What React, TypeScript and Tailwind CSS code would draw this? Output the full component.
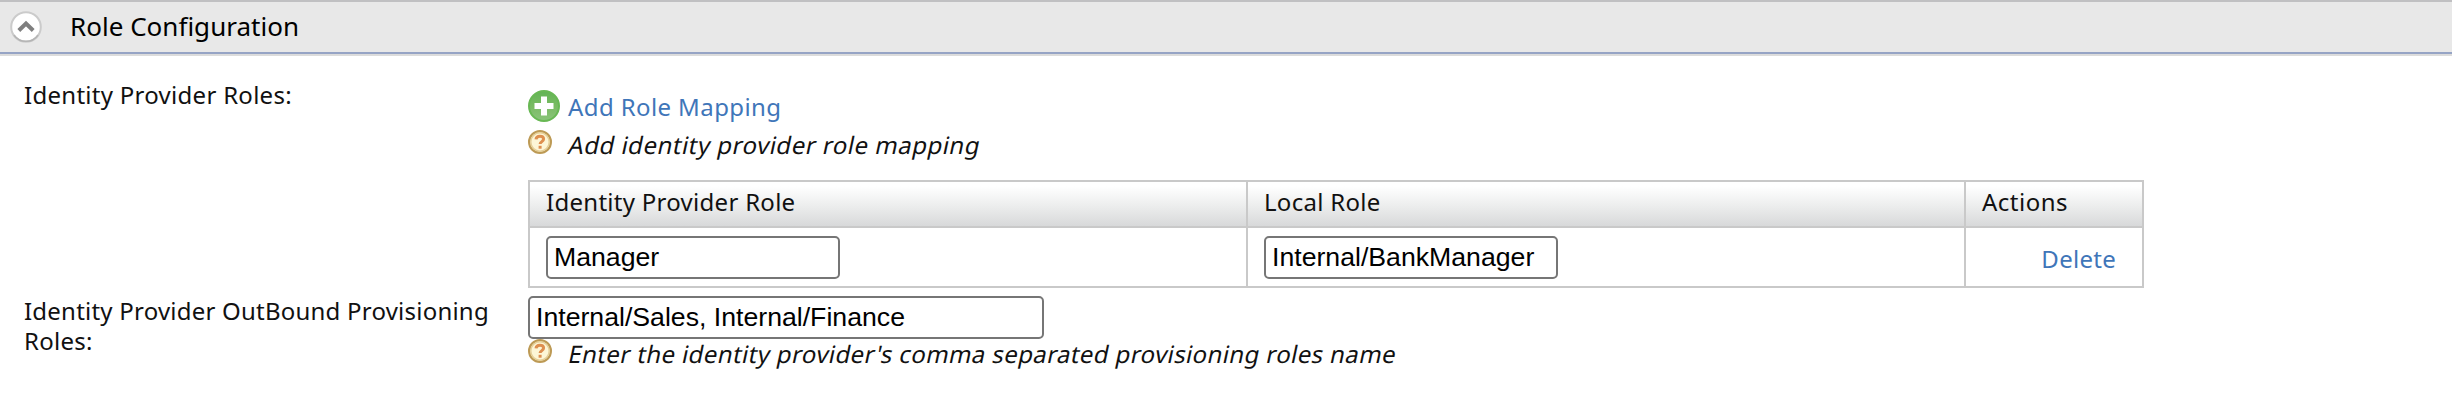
import type { ReactNode } from "react";

function CollapseIcon() {
  return (
    <svg className="block size-8 shrink-0" viewBox="0 0 32 32" fill="none">
      <circle cx="16" cy="16" r="14.800" fill="#fff" stroke="#cbcbcb" strokeWidth="2" />
      <path d="M4 24a14.500 14.500 0 0 0 24 0" stroke="#b4b4b4" strokeWidth="1.500" />
      <path d="M8.800 19.500l7.200-7 7.200 7" stroke="#7f7f7f" strokeWidth="4" />
    </svg>
  );
}

function AddIcon() {
  return (
    <svg className="block size-8 shrink-0" viewBox="0 0 32 32">
      <defs>
        <linearGradient id="add-fill" x1="0" y1="0" x2="0" y2="1">
          <stop offset="0" stopColor="#62b455" />
          <stop offset="0.5" stopColor="#7abb63" />
          <stop offset="1" stopColor="#8ac47b" />
        </linearGradient>
      </defs>
      <circle cx="16" cy="16" r="15" fill="url(#add-fill)" stroke="#68b854" strokeWidth="2" />
      <path d="M13 6.500h6V13h6.500v6H19v6.500h-6V19H6.500v-6H13z" fill="#fff" />
    </svg>
  );
}

function HelpIcon() {
  return (
    <svg className="block size-6 shrink-0" viewBox="0 0 24 24" fill="none">
      <circle cx="12" cy="12" r="10.900" fill="#fdf6d6" stroke="#bd9a55" strokeWidth="2.200" />
      <circle cx="12" cy="12" r="9.200" stroke="#e5cf98" strokeWidth="1.400" />
      <path d="M8 9.400c.2-2.200 1.700-3.200 3.900-3.200 2.300 0 3.700 1.100 3.700 2.900 0 2.500-3.500 2.500-3.500 5" stroke="#de8f4f" strokeWidth="3" />
      <path d="M10.600 15.800h3v2.900h-3z" fill="#de8f4f" />
    </svg>
  );
}

function Hint({ children, className }: { children: ReactNode; className: string }) {
  return (
    <div className="flex items-start gap-[17px]">
      <HelpIcon />
      <span className={`inline-block -skew-x-12 whitespace-nowrap ${className}`}>{children}</span>
    </div>
  );
}

function Field({ value, label, className }: { value: string; label: string; className: string }) {
  return (
    <input
      aria-label={label}
      defaultValue={value}
      className={`block h-[43px] rounded-[5px] border-2 border-[#767676] bg-white px-[6px] font-['Liberation_Sans',Arial,sans-serif] text-[26.667px] leading-[30px] tracking-normal text-black outline-none ${className}`}
    />
  );
}

const headCell = "h-[44px] bg-linear-to-b from-white from-10% via-[#eceded] via-55% to-[#d8d9da] pl-4 leading-[40px]";

export default function App() {
  return (
    <main className="h-[412px] w-[2452px] bg-white font-['Noto_Sans',sans-serif] text-[24px] leading-[30px] tracking-[0.28px] text-[#111]">
      <header className="flex h-[54px] items-center gap-[28px] border-t-2 border-b-2 border-t-[#c0c0c2] border-b-[#96a4c5] bg-[#e8e8e8] pl-[10px] text-black">
        <CollapseIcon />
        <h2 className="pb-[2px] text-[26px] whitespace-nowrap tracking-[0.02px]">Role Configuration</h2>
      </header>
      <div className="h-[2px] bg-[#dcdcdc]" />

      <section className="flex h-[240px] pt-[24px]">
        <div className="w-[528px] shrink-0 pl-6">
          <span className="whitespace-nowrap">Identity Provider Roles:</span>
        </div>
        <div className="pt-[10px]">
          <a href="#" className="flex h-8 items-start gap-2 text-[#3f76b9]">
            <AddIcon />
            <span className="pt-[2px] tracking-[0.4px] whitespace-nowrap">Add Role Mapping</span>
          </a>
          <div className="mt-2 h-[50px]">
            <Hint className="tracking-[0.5px]">Add identity provider role mapping</Hint>
          </div>
          <div className="grid w-[1616px] grid-cols-[716px_716px_176px] gap-[2px] border-2 border-[#c9c9c9] bg-[#c9c9c9]">
            <div className={headCell}><span>Identity Provider Role</span></div>
            <div className={headCell}><span>Local Role</span></div>
            <div className={headCell}><span className="tracking-[0.5px]">Actions</span></div>
            <div className="h-[58px] bg-white pt-[8px] pl-4">
              <Field label="Identity Provider Role" value="Manager" className="w-[294px]" />
            </div>
            <div className="h-[58px] bg-white pt-[8px] pl-4">
              <Field label="Local Role" value="Internal/BankManager" className="w-[294px]" />
            </div>
            <div className="h-[58px] bg-white pt-[16px] pr-[26px] text-right">
              <a href="#" className="text-[#3f76b9]">Delete</a>
            </div>
          </div>
        </div>
      </section>

      <section className="flex">
        <div className="w-[528px] shrink-0 pl-6">
          <span className="block tracking-[0.22px] whitespace-nowrap">Identity Provider OutBound Provisioning</span>
          <span>Roles:</span>
        </div>
        <div>
          <Field label="OutBound Provisioning Roles" value="Internal/Sales, Internal/Finance" className="w-[516px]" />
          <Hint className="tracking-[0.39px]">Enter the identity provider's comma separated provisioning roles name</Hint>
        </div>
      </section>
    </main>
  );
}
